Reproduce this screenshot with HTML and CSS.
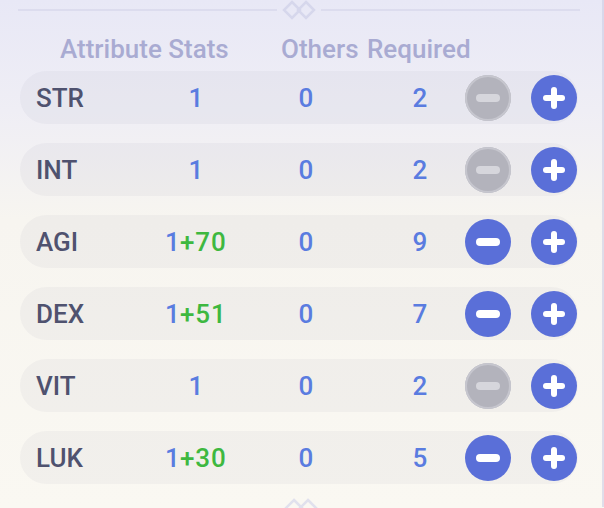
FILE: index.html
```html
<!DOCTYPE html>
<html>
  <head lang="en">
    <meta charset="UTF-8" />
    <title>Attribute Stats</title>
    <link rel="stylesheet" href="styles.css">
  </head>

  <body>
    <div class="panel">
      <div class="divider">
        <span class="divider-line"></span>
        <svg class="divider-knot" width="36" height="20" viewBox="0 0 36 20">
          <path d="M11 2 L19 10 L11 18 L3 10 Z" fill="none" stroke="#d6d7ec" stroke-width="2.5" />
          <path d="M25 2 L33 10 L25 18 L17 10 Z" fill="none" stroke="#d6d7ec" stroke-width="2.5" />
        </svg>
        <span class="divider-line"></span>
      </div>

      <div class="stats-head">
        <span class="head-attr">Attribute Stats</span>
        <span class="head-others">Others</span>
        <span class="head-req">Required</span>
      </div>

      <div class="stats-list">
        <div class="stat-row">
          <span class="stat-name">STR</span>
          <span class="stat-val"><span class="base">1</span></span>
          <span class="stat-others">0</span>
          <span class="stat-req">2</span>
          <button class="btn btn-minus disabled"></button>
          <button class="btn btn-plus"></button>
        </div>
        <div class="stat-row">
          <span class="stat-name">INT</span>
          <span class="stat-val"><span class="base">1</span></span>
          <span class="stat-others">0</span>
          <span class="stat-req">2</span>
          <button class="btn btn-minus disabled"></button>
          <button class="btn btn-plus"></button>
        </div>
        <div class="stat-row">
          <span class="stat-name">AGI</span>
          <span class="stat-val"><span class="base">1</span><span class="bonus">+70</span></span>
          <span class="stat-others">0</span>
          <span class="stat-req">9</span>
          <button class="btn btn-minus"></button>
          <button class="btn btn-plus"></button>
        </div>
        <div class="stat-row">
          <span class="stat-name">DEX</span>
          <span class="stat-val"><span class="base">1</span><span class="bonus">+51</span></span>
          <span class="stat-others">0</span>
          <span class="stat-req">7</span>
          <button class="btn btn-minus"></button>
          <button class="btn btn-plus"></button>
        </div>
        <div class="stat-row">
          <span class="stat-name">VIT</span>
          <span class="stat-val"><span class="base">1</span></span>
          <span class="stat-others">0</span>
          <span class="stat-req">2</span>
          <button class="btn btn-minus disabled"></button>
          <button class="btn btn-plus"></button>
        </div>
        <div class="stat-row">
          <span class="stat-name">LUK</span>
          <span class="stat-val"><span class="base">1</span><span class="bonus">+30</span></span>
          <span class="stat-others">0</span>
          <span class="stat-req">5</span>
          <button class="btn btn-minus"></button>
          <button class="btn btn-plus"></button>
        </div>
      </div>

      <div class="footer-knot">
        <svg width="36" height="20" viewBox="0 0 36 20">
          <path d="M11 2 L19 10 L11 18 L3 10 Z" fill="none" stroke="#dcdcec" stroke-width="2.5" />
          <path d="M25 2 L33 10 L25 18 L17 10 Z" fill="none" stroke="#dcdcec" stroke-width="2.5" />
        </svg>
      </div>
    </div>
  </body>
</html>
```

FILE: styles.css
```css
html,
body {
  margin: 0;
  padding: 0;
}

body {
  width: 604px;
  height: 508px;
  overflow: hidden;
  font-family: "Roboto", "Liberation Sans", sans-serif;
  background: linear-gradient(180deg, #e8e8f6 0px, #efeef5 110px, #f7f5f0 220px, #faf8f2 508px);
}

.panel {
  height: 508px;
  box-sizing: border-box;
  border-right: 2px solid rgba(205, 205, 228, 0.6);
}

/* top ornament */
.divider {
  display: flex;
  align-items: center;
  padding: 0 22px 0 18px;
  margin-top: -1px;
  height: 22px;
}

.divider-line {
  flex: 1;
  height: 2px;
  background: #dcdcee;
}

.divider-knot {
  margin: 0 4px;
}

.stats-head {
  display: flex;
  align-items: center;
  height: 30px;
  margin-top: 13px;
  padding-left: 60px;
  font-size: 26px;
  font-weight: 500;
  color: #a9abd2;
}

.head-attr {
  width: 221px;
}

.head-others {
  width: 86px;
}

.stats-list {
  display: flex;
  flex-direction: column;
  gap: 19px;
  margin-top: 7px;
}

.stat-row {
  display: grid;
  grid-template-columns: 110px 100px 120px 96px 46px 46px;
  align-items: center;
  height: 53px;
  margin: 0 24px 0 20px;
  padding-left: 16px;
  border-radius: 27px;
  background: rgba(120, 120, 150, 0.06);
  font-size: 26px;
  font-weight: 500;
}

.stat-name {
  color: #4f526f;
}

.stat-val,
.stat-others,
.stat-req {
  text-align: center;
  color: #5a7ce0;
}

.stat-req {
  padding-left: 12px;
}

.bonus {
  color: #3eb840;
  letter-spacing: 1px;
}

.btn {
  position: relative;
  width: 46px;
  height: 46px;
  padding: 0;
  border: none;
  border-radius: 50%;
  background: #5a6fd8;
}

.btn-minus {
  margin-left: 3px;
}

.btn-plus {
  margin-left: 23px;
}

.btn::before {
  content: "";
  position: absolute;
  left: 11px;
  top: 19px;
  width: 24px;
  height: 8px;
  border-radius: 4px;
  background: #ffffff;
}

.btn-plus::before {
  left: 12px;
  top: 20px;
  width: 22px;
  height: 6px;
  border-radius: 3px;
}

.btn-plus::after {
  content: "";
  position: absolute;
  left: 20px;
  top: 12px;
  width: 6px;
  height: 22px;
  border-radius: 3px;
  background: #ffffff;
}

.btn.disabled {
  background: #b3b3bc;
  box-shadow: inset 0 0 0 2px #c6c6ce;
}

.btn.disabled::before {
  background: #d6d6dc;
}

.footer-knot {
  display: flex;
  justify-content: center;
  margin-top: 14px;
  opacity: 0.8;
}
```
